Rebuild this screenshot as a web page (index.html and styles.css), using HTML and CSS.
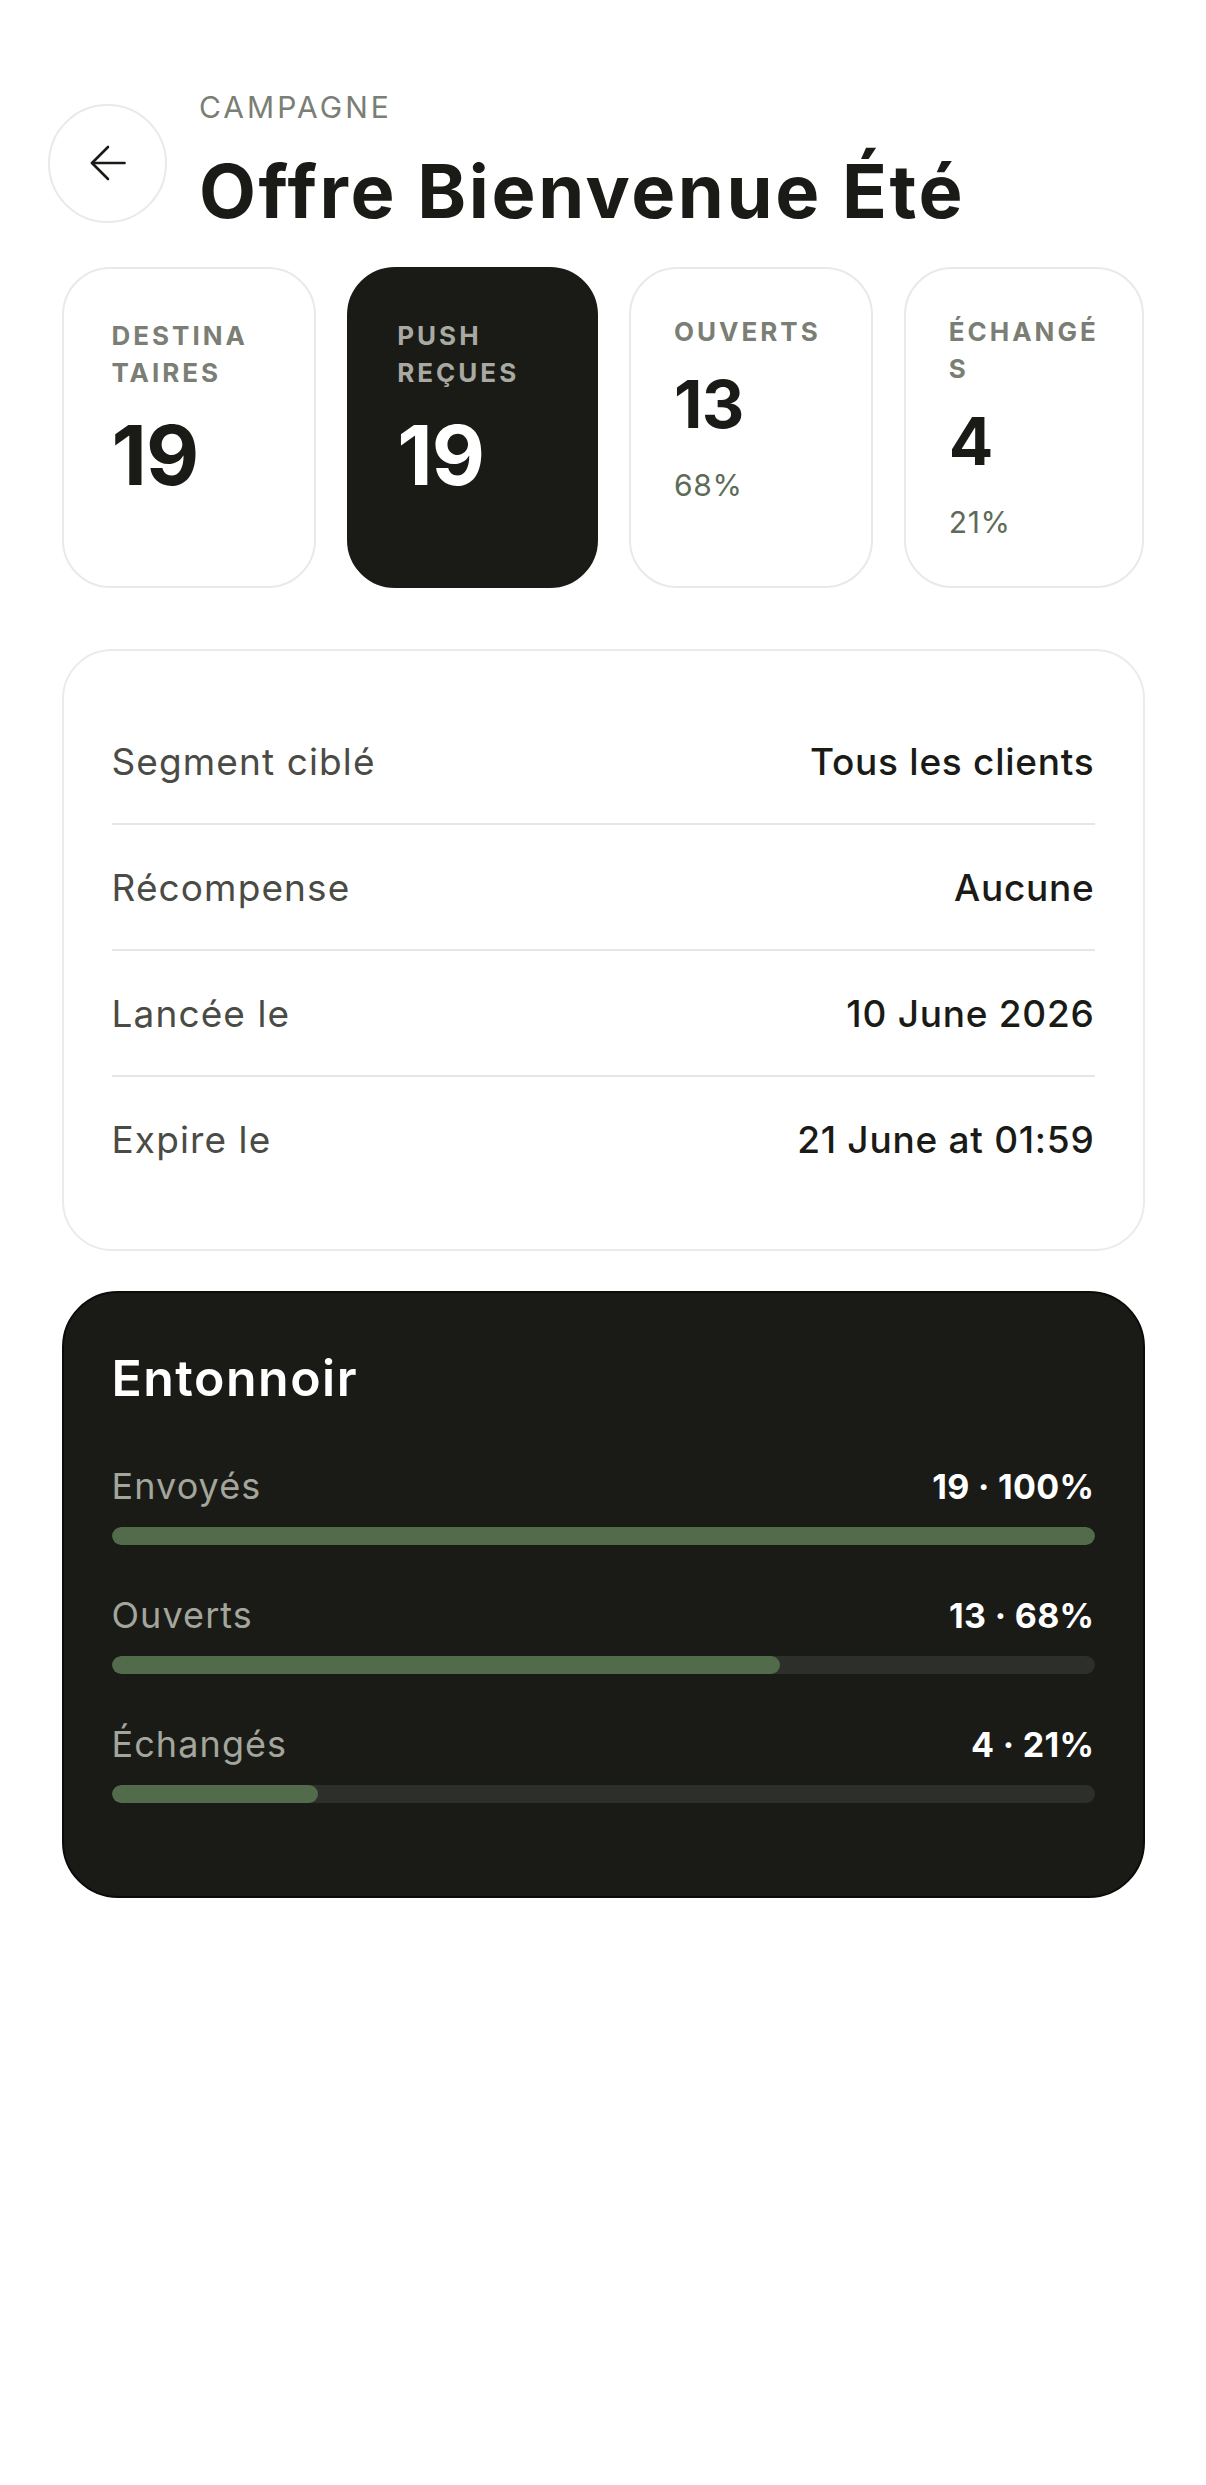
FILE: index.html
```html
<!DOCTYPE html>
<html lang="fr">
<head>
    <meta charset="UTF-8">
    <meta name="viewport" content="width=device-width, initial-scale=1.0">
    <title>Offre Bienvenue Été</title>
    <link rel="stylesheet" href="styles.css">
</head>
<body>
    <div class="topbar">
        <button class="back-btn" aria-label="Retour">
            <svg width="36" height="36" viewBox="0 0 36 36" fill="none" stroke="#1a1b17" stroke-width="2.6" stroke-linecap="round" stroke-linejoin="round">
                <path d="M34.5 18H2"/>
                <path d="M18 2L2 18L18 34"/>
            </svg>
        </button>
        <div class="title-block">
            <div class="eyebrow">CAMPAGNE</div>
            <h1>Offre Bienvenue Été</h1>
        </div>
    </div>

    <div class="content">
        <div class="stats">
            <div class="stat stat-big">
                <div class="stat-label">DESTINA<wbr>TAIRES</div>
                <div class="stat-value">19</div>
            </div>
            <div class="stat stat-big stat-dark">
                <div class="stat-label">PUSH REÇUES</div>
                <div class="stat-value">19</div>
            </div>
            <div class="stat">
                <div class="stat-label">OUVERTS</div>
                <div class="stat-value">13</div>
                <div class="stat-rate">68%</div>
            </div>
            <div class="stat">
                <div class="stat-label">ÉCHANGÉ<wbr>S</div>
                <div class="stat-value">4</div>
                <div class="stat-rate">21%</div>
            </div>
        </div>

        <div class="details">
            <div class="detail-row">
                <span class="detail-label">Segment ciblé</span>
                <span class="detail-value">Tous les clients</span>
            </div>
            <div class="detail-row">
                <span class="detail-label">Récompense</span>
                <span class="detail-value">Aucune</span>
            </div>
            <div class="detail-row">
                <span class="detail-label">Lancée le</span>
                <span class="detail-value">10 June 2026</span>
            </div>
            <div class="detail-row">
                <span class="detail-label">Expire le</span>
                <span class="detail-value">21 June at 01:59</span>
            </div>
        </div>

        <div class="funnel">
            <h2>Entonnoir</h2>
            <div class="funnel-row">
                <div class="funnel-head">
                    <span class="funnel-label">Envoyés</span>
                    <span class="funnel-value">19 · 100%</span>
                </div>
                <div class="bar"><div class="bar-fill" style="width: 100%"></div></div>
            </div>
            <div class="funnel-row">
                <div class="funnel-head">
                    <span class="funnel-label">Ouverts</span>
                    <span class="funnel-value">13 · 68%</span>
                </div>
                <div class="bar"><div class="bar-fill" style="width: 68%"></div></div>
            </div>
            <div class="funnel-row">
                <div class="funnel-head">
                    <span class="funnel-label">Échangés</span>
                    <span class="funnel-value">4 · 21%</span>
                </div>
                <div class="bar"><div class="bar-fill" style="width: 21%"></div></div>
            </div>
        </div>
    </div>
</body>
</html>
```

FILE: styles.css
```css
body {
    font-family: Inter, "Noto Sans", sans-serif;
    margin: 0;
    padding: 0;
    background-color: #fff;
    color: #1a1b17;
}
.topbar {
    display: flex;
    align-items: center;
    gap: 32px;
    padding: 89px 48px 0;
}
.back-btn {
    width: 119px;
    height: 119px;
    flex-shrink: 0;
    margin-top: 6px;
    border: 2px solid #e9e9e7;
    border-radius: 50%;
    background: #fff;
    display: flex;
    align-items: center;
    justify-content: center;
    padding: 0;
    cursor: pointer;
}
.eyebrow {
    font-size: 30px;
    line-height: 36px;
    letter-spacing: 0.1em;
    color: #7b7e74;
    margin-bottom: 27px;
}
.title-block h1 {
    margin: 0;
    font-size: 74px;
    line-height: 79px;
    font-weight: 700;
    letter-spacing: 0.035em;
}
.content {
    max-width: 1083px;
    margin: 0 auto;
    padding-bottom: 60px;
}
.stats {
    display: grid;
    grid-template-columns: 254fr 250fr 243fr 240fr;
    gap: 31px;
    margin-top: 36px;
}
.stat {
    border: 2px solid #e9e9e7;
    border-radius: 48px;
    padding: 44px 43px 40px;
    min-height: 321px;
    box-sizing: border-box;
}
.stat-big {
    padding: 48px 48px 40px;
}
.stat-dark {
    background: #1a1b17;
    border-color: #1a1b17;
    color: #fff;
}
.stat-label {
    font-size: 26px;
    line-height: 37px;
    font-weight: 700;
    letter-spacing: 0.115em;
    color: #7b7e74;
}
.stat-dark .stat-label {
    color: #a8aaa2;
}
.stat-value {
    margin-top: 18px;
    font-size: 66px;
    line-height: 73px;
    font-weight: 700;
    letter-spacing: -0.01em;
}
.stat-big .stat-value {
    margin-top: 20px;
    font-size: 82px;
    line-height: 90px;
}
.stat-rate {
    margin-top: 25px;
    font-size: 30px;
    line-height: 39px;
    color: #5e6b58;
    letter-spacing: 0.02em;
}
.details {
    margin-top: 61px;
    border: 2px solid #ebebea;
    border-radius: 50px;
    padding: 48px;
}
.detail-row {
    display: flex;
    justify-content: space-between;
    align-items: center;
    height: 124px;
    font-size: 37px;
    border-bottom: 2px solid #e6e6e4;
}
.detail-row:last-child {
    border-bottom: none;
}
.detail-label {
    color: #4a4b45;
    letter-spacing: 0.03em;
}
.detail-value {
    font-weight: 500;
    letter-spacing: 0.02em;
}
.funnel {
    margin-top: 40px;
    background: #1a1b17;
    border: 2px solid #0b0b09;
    border-radius: 56px;
    padding: 55px 48px 46px;
    color: #fff;
}
.funnel h2 {
    margin: 0 0 55px;
    font-size: 50px;
    line-height: 60px;
    font-weight: 600;
    letter-spacing: 0.03em;
}
.funnel-row {
    margin-bottom: 47px;
}
.funnel-head {
    display: flex;
    justify-content: space-between;
    align-items: center;
    height: 46px;
    margin-bottom: 18px;
}
.funnel-label {
    font-size: 36px;
    color: #a3a69c;
    letter-spacing: 0.03em;
}
.funnel-value {
    font-size: 34px;
    font-weight: 700;
    letter-spacing: 0.01em;
}
.bar {
    height: 18px;
    border-radius: 9px;
    background: #2d2f2a;
    overflow: hidden;
}
.bar-fill {
    height: 100%;
    border-radius: 9px;
    background: #526b4b;
}
```
